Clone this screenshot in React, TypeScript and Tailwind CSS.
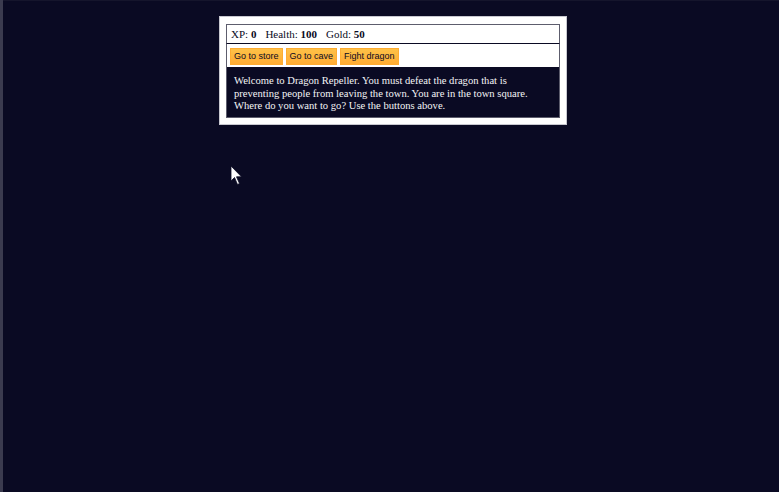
export default function App() {
  const serif = { fontFamily: '"Liberation Serif", "Times New Roman", serif' };

  return (
    <div className="flex min-h-screen h-[492px] bg-[#0a0a23] overflow-hidden">
      <div className="w-[3px] shrink-0 bg-[#3b3b4f]" />
      <div className="relative flex-1 border-t border-[#15152c]">
        <div className="ml-[217px] mt-[16px] w-[346px] bg-white px-[6px] pt-[7px] pb-[6px] ring-1 ring-[#c8c8d0]">
          <div
            className="flex h-[20px] items-center gap-[9px] border border-[#5d5d6d] border-b-[#0a0a23] px-[4px] text-[11px] text-[#0a0a23]"
            style={serif}
          >
            <span>
              XP: <b>0</b>
            </span>
            <span>
              Health: <b>100</b>
            </span>
            <span>
              Gold: <b>50</b>
            </span>
          </div>
          <div className="flex h-[23px] items-start gap-[3px] border-x border-[#5d5d6d] px-[3px] pt-[4px]">
            {["Go to store", "Go to cave", "Fight dragon"].map((label) => (
              <button
                key={label}
                type="button"
                className="h-[17px] border border-[#feac32] bg-gradient-to-b from-[#fec147] to-[#ffac33] px-[3px] text-[9px] leading-none text-[#0a0a23]"
                style={{ fontFamily: '"Liberation Sans", Tahoma, sans-serif' }}
              >
                {label}
              </button>
            ))}
          </div>
          <div
            className="h-[51px] border border-[#5d5d6d] border-t-0 bg-[#0a0a23] px-[7px] pt-[8px] text-[10.6px] leading-[12.7px] text-[#f4f4f6]"
            style={serif}
          >
            Welcome to Dragon Repeller. You must defeat the dragon that is preventing
            people from leaving the town. You are in the town square. Where do you want
            to go? Use the buttons above.
          </div>
        </div>

        <svg
          className="absolute left-[227px] top-[164px]"
          width="14"
          height="22"
          viewBox="0 0 14 22"
        >
          <path
            d="M1 1 L1 16 L4.5 12.5 L7.5 19.5 L9.5 18.5 L6.5 11.8 L11.5 11.8 Z"
            fill="#ffffff"
            stroke="#0a0a23"
            strokeWidth="0.8"
          />
        </svg>
      </div>
    </div>
  );
}
